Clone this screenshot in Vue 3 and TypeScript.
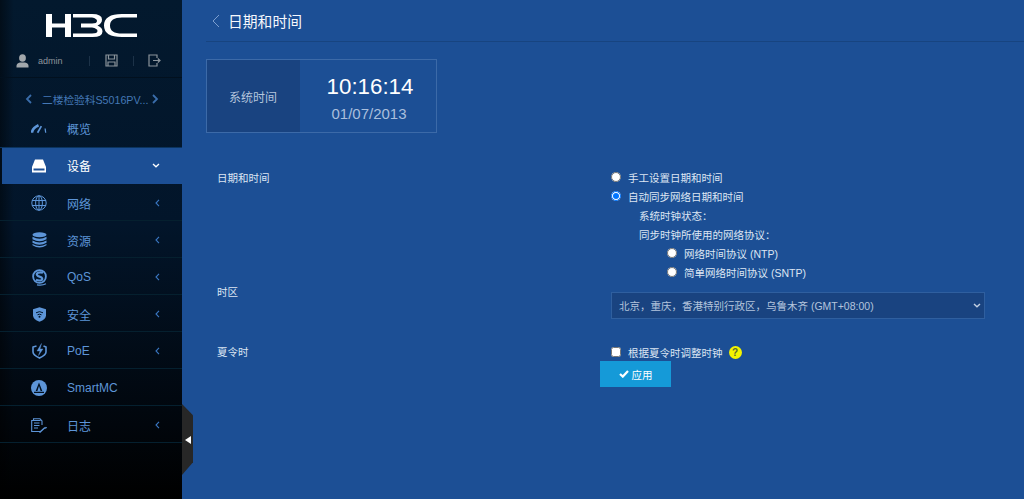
<script setup lang="ts">
// Device web console: date and time page
interface MenuItem {
  label: string
  icon: string
  arrow?: boolean
  active?: boolean
}

const menu: MenuItem[] = [
  { label: '概览', icon: 'gauge' },
  { label: '设备', icon: 'drive', arrow: true, active: true },
  { label: '网络', icon: 'globe', arrow: true },
  { label: '资源', icon: 'db', arrow: true },
  { label: 'QoS', icon: 'qos', arrow: true },
  { label: '安全', icon: 'shield', arrow: true },
  { label: 'PoE', icon: 'poe', arrow: true },
  { label: 'SmartMC', icon: 'smart' },
  { label: '日志', icon: 'log', arrow: true },
]
</script>

<template>
  <div class="page">
    <aside class="sidebar">
      <div class="logo">
        <svg width="92" height="24" viewBox="0 0 92 24" fill="#fff">
          <path d="M0 0h6v23H0zM19 0h6v23h-6zM6 9.500h13v4H6z" />
          <path d="M27 0h19q10 0 10 5.500 0 4-4.500 6 5 2 5 6 0 5.500-10 5.500H27v-3.500h19q5.500 0 5.500-2.500t-5.500-3.500H35v-4h11q5 0 5-2.500T46 3.500H27z" />
          <path d="M91 0H76Q58 0 58 11.500T76 23h15v-3.500H76q-12 0-12-8t12-8h15z" />
        </svg>
      </div>

      <div class="user-bar">
        <svg class="user-icon" width="13" height="14" viewBox="0 0 13 14">
          <ellipse cx="6.500" cy="4" rx="3.400" ry="3.800" fill="#a3a8ac" />
          <path d="M0.500 13.500v-1.800q0-2.200 3.500-3.200h5q3.500 1 3.500 3.200v1.800z" fill="#a3a8ac" />
        </svg>
        <span class="user-name">admin</span>
        <i class="bar-sep first"></i>
        <svg class="save-icon" width="13" height="13" viewBox="0 0 13 13" fill="none" stroke="#8b949b" stroke-width="1.200">
          <path d="M1 1h11v11H1z" />
          <path d="M3.500 1v4h6V1M3 12V8h7v4" />
        </svg>
        <i class="bar-sep second"></i>
        <svg class="exit-icon" width="13" height="13" viewBox="0 0 13 13" fill="none" stroke="#8b949b" stroke-width="1.200">
          <path d="M9 4V1H1v11h8V9" />
          <path d="M5 6.500h7M9.800 4.500l2.200 2-2.200 2" />
        </svg>
      </div>

      <div class="device-name">
        <svg width="7" height="10" viewBox="0 0 7 10" fill="none" stroke="#3a6dab" stroke-width="1.800"><path d="M6 1L2 5l4 4" /></svg>
        <span>二楼检验科S5016PV...</span>
        <svg width="7" height="10" viewBox="0 0 7 10" fill="none" stroke="#3a6dab" stroke-width="1.800"><path d="M1 1l4 4-4 4" /></svg>
      </div>

      <nav class="menu">
        <div
          v-for="item in menu"
          :key="item.label"
          class="menu-item"
          :class="{ active: item.active }"
        >
          <span class="menu-icon">
            <svg v-if="item.icon === 'gauge'" width="17" height="11" viewBox="0 0 17 11" fill="none" stroke="currentColor">
              <path d="M1 10q0.500-5 7-8" stroke-width="2.800" />
              <path d="M7 10l4-7" stroke-width="1.800" />
              <path d="M15 5.500l.6 4.500" stroke-width="1.300" />
            </svg>
            <svg v-else-if="item.icon === 'drive'" width="14" height="14" viewBox="0 0 14 14">
              <path d="M3 0.500h8l3 7.500v5.500H0V8z" fill="currentColor" />
              <path d="M1.500 9.500h11v2h-11z" fill="#1c4f95" />
            </svg>
            <svg v-else-if="item.icon === 'globe'" width="16" height="16" viewBox="0 0 16 16" fill="none" stroke="currentColor">
              <circle cx="8" cy="8" r="7.200" />
              <ellipse cx="8" cy="8" rx="3.400" ry="7.200" />
              <path d="M1 5.500h14M1 10.500h14M8 1v14" />
            </svg>
            <svg v-else-if="item.icon === 'db'" width="15" height="16" viewBox="0 0 15 16" fill="currentColor">
              <ellipse cx="7.500" cy="2.800" rx="7" ry="2.500" />
              <path d="M0.500 4.800q7 4 14 0v2.400q-7 4-14 0zM0.500 8.400q7 4 14 0v2.400q-7 4-14 0zM0.500 12q7 4 14 0v1.200q-7 4.500-14 0z" />
            </svg>
            <svg v-else-if="item.icon === 'qos'" width="15" height="17" viewBox="0 0 15 17">
              <circle cx="7.500" cy="7.500" r="6.400" fill="#02162a" stroke="currentColor" stroke-width="1.800" />
              <path d="M11 3.800Q8.500 2.800 6 3.800 3.500 5.300 6 7l3.500 1.500q1.800 1.800-.5 2.800-2.500.6-5-.5" fill="none" stroke="currentColor" stroke-width="2.200" />
              <path d="M5 15.800q5 1 9-1" fill="none" stroke="currentColor" stroke-width="1.200" />
            </svg>
            <svg v-else-if="item.icon === 'shield'" width="13" height="15" viewBox="0 0 13 15">
              <path d="M6.500 0.300L13 2.200v6q0 4-6.500 6.500Q0 12.200 0 8.200v-6z" fill="currentColor" />
              <path d="M3 5.800q3.500-2.300 7 0M4.500 7.800q2-1.200 4 0" fill="none" stroke="#02162a" stroke-width="1" />
              <circle cx="6.500" cy="9.800" r="1" fill="#02162a" />
            </svg>
            <svg v-else-if="item.icon === 'poe'" width="15" height="16" viewBox="0 0 15 16" fill="none" stroke="currentColor" stroke-width="1.600">
              <path d="M4.500 3L1 4v5q0 3 6.500 6 6.500-3 6.500-6V4l-2.500-1" />
              <path d="M9.500 0.500L5 8h3l-1.500 4.500L11 6H8z" fill="currentColor" stroke-width="0.400" />
            </svg>
            <svg v-else-if="item.icon === 'smart'" width="16" height="16" viewBox="0 0 16 16">
              <circle cx="8" cy="8" r="8" fill="currentColor" />
              <path d="M8 2.500L4.700 11h1.700l1.600-5 1.600 5h1.700zM3 11.800h10v1.200H3z" fill="#02101f" />
            </svg>
            <svg v-else width="16" height="15" viewBox="0 0 16 15" fill="none" stroke="currentColor" stroke-width="1.100">
              <path d="M2.500 2.500V0.800h6.500L11 3v4M9 13.500H0.700V2.500h8.800" />
              <path d="M3 5h5.500M3 7.500h5.500M3 10h4" />
              <path d="M8.500 14.500l5-4.500q1.200.3 2-.8" stroke-width="1.500" />
            </svg>
          </span>
          <span class="menu-label">{{ item.label }}</span>
          <svg v-if="item.active" class="menu-arrow down" width="8" height="5" viewBox="0 0 8 5" fill="none" stroke="currentColor" stroke-width="1.300"><path d="M1 1l3 2.800L7 1" /></svg>
          <svg v-else-if="item.arrow" class="menu-arrow" width="5" height="8" viewBox="0 0 5 8" fill="none" stroke="#3a78c4" stroke-width="1.100"><path d="M4 0.800L1 4l3 3.200" /></svg>
        </div>
      </nav>

      <div class="collapse-handle"><i></i></div>
    </aside>

    <main class="content">
      <header class="title-bar">
        <svg width="9" height="14" viewBox="0 0 9 14" fill="none" stroke="#7d9fcf" stroke-width="1"><path d="M8 1L2 7l6 6" /></svg>
        <h1>日期和时间</h1>
      </header>

      <section class="clock-card">
        <div class="clock-label">系统时间</div>
        <div class="clock-value">
          <div class="clock-time">10:16:14</div>
          <div class="clock-date">01/07/2013</div>
        </div>
      </section>

      <form class="form" @submit.prevent>
        <div class="form-label first-label">日期和时间</div>
        <div class="options">
          <label class="opt"><input type="radio" name="mode" />手工设置日期和时间</label>
          <label class="opt"><input type="radio" name="mode" checked />自动同步网络日期和时间</label>
          <div class="opt sub">系统时钟状态：</div>
          <div class="opt sub">同步时钟所使用的网络协议：</div>
          <label class="opt proto"><input type="radio" name="proto" />网络时间协议 (NTP)</label>
          <label class="opt proto"><input type="radio" name="proto" />简单网络时间协议 (SNTP)</label>
        </div>

        <div class="form-label zone-label">时区</div>
        <div class="zone">
          <select>
            <option>北京，重庆，香港特别行政区，乌鲁木齐 (GMT+08:00)</option>
          </select>
          <svg class="zone-arrow" width="8" height="5" viewBox="0 0 8 5" fill="none" stroke="#c3d0e2" stroke-width="1.400"><path d="M1 1l3 2.800L7 1" /></svg>
        </div>

        <div class="form-label dst-label">夏令时</div>
        <div class="dst">
          <label class="opt"><input type="checkbox" />根据夏令时调整时钟</label>
          <span class="help">?</span>
        </div>

        <div class="actions">
          <button type="submit">
            <svg width="10" height="8" viewBox="0 0 10 8" fill="none" stroke="#fff" stroke-width="2.200"><path d="M1 4l2.800 2.600L9 1" /></svg>
            应用
          </button>
        </div>
      </form>
    </main>
  </div>
</template>

<style>
html,
body {
  margin: 0;
  background: #1c4f95;
}
</style>

<style scoped>
.page {
  display: flex;
  width: 1024px;
  height: 499px;
  overflow: hidden;
  background: #1c4f95;
  color: #dce6f3;
  font-family: "Liberation Sans", "Noto Sans CJK SC", sans-serif;
}

/* sidebar */
.sidebar {
  position: relative;
  flex: 0 0 182px;
  background:
    linear-gradient(90deg, rgba(0, 0, 0, 0.45) 0, rgba(0, 0, 0, 0) 14px),
    linear-gradient(180deg, #03192e 0%, #02152a 45%, #01060c 85%, #000 100%);
}

.logo {
  height: 49px;
  padding: 14px 0 0 46px;
  box-sizing: border-box;
}

.user-bar {
  position: relative;
  display: flex;
  align-items: center;
  height: 29px;
  padding: 0 0 5px 16px;
  box-sizing: border-box;
  border-bottom: 1px solid #02101e;
}

.user-name {
  margin-left: 9px;
  font-size: 9px;
  color: #8d959c;
}

.bar-sep {
  width: 1px;
  height: 10px;
  background: #1c3248;
}

.bar-sep.first {
  margin-left: 26px;
}

.save-icon {
  margin-left: 15px;
}

.bar-sep.second {
  margin-left: 15px;
}

.exit-icon {
  margin-left: 14px;
}

.device-name {
  display: flex;
  align-items: center;
  height: 42px;
  padding: 0 0 0 25px;
  box-sizing: border-box;
  font-size: 10.700px;
  color: #4478b6;
}

.device-name span {
  margin: 0 3px 0 10px;
}

.menu {
  margin-top: -2px;
}

.menu-item {
  display: flex;
  align-items: center;
  height: 37px;
  padding-top: 2px;
  box-sizing: border-box;
  border-bottom: 1px solid #05202f;
  color: #5d95d8;
  font-size: 12px;
}

.menu-item:first-child {
  height: 30px;
  padding-top: 0;
  padding-bottom: 8px;
  border-bottom: 1px solid #0b345f;
}

.menu-item.active {
  height: 36px;
  margin-left: 2px;
  padding-top: 0;
  padding-bottom: 1px;
  background: #1c4f95;
  color: #fff;
  border-bottom: 0;
}

.menu-icon {
  display: flex;
  align-items: center;
  justify-content: center;
  width: 16px;
  margin-left: 31px;
}

.menu-item.active .menu-icon {
  margin-left: 29px;
}

.menu-label {
  flex: 1;
  margin-left: 20px;
}

.menu-arrow {
  margin-right: 22px;
}

.collapse-handle {
  position: absolute;
  top: 404px;
  left: 182px;
  display: flex;
  align-items: center;
  justify-content: center;
  width: 11px;
  height: 71px;
  background: #272727;
  clip-path: polygon(0 0, 100% 16%, 100% 82%, 0 100%);
}

.collapse-handle i {
  width: 0;
  height: 0;
  border-top: 4.500px solid transparent;
  border-bottom: 4.500px solid transparent;
  border-right: 6px solid #fff;
}

/* content */
.content {
  flex: 1;
  min-width: 0;
  padding: 0 0 0 24px;
}

.title-bar {
  display: flex;
  align-items: center;
  gap: 8px;
  height: 41px;
  padding-left: 5px;
  border-bottom: 1px solid #174480;
}

.title-bar h1 {
  margin: 0;
  font-size: 14.800px;
  font-weight: 400;
  color: #f6f8fc;
}

.clock-card {
  display: flex;
  width: 231px;
  height: 74px;
  margin-top: 17px;
  box-sizing: border-box;
  border: 1px solid #3c6aa8;
}

.clock-label {
  display: flex;
  align-items: center;
  justify-content: center;
  width: 93px;
  padding-right: 1px;
  box-sizing: border-box;
  background: #194380;
  font-size: 12px;
  color: #b4c5dd;
}

.clock-value {
  flex: 1;
  text-align: center;
}

.clock-time {
  margin-top: 13px;
  padding-left: 4px;
  font-size: 22.300px;
  line-height: 28px;
  color: #fff;
}

.clock-date {
  margin-top: 4px;
  padding-left: 2px;
  font-size: 15px;
  line-height: 18px;
  color: #a9bfdd;
}

.form {
  display: grid;
  grid-template-columns: 394px 374px;
  margin-top: 35px;
  padding-left: 11px;
  font-size: 10.500px;
  color: #dce6f3;
}

.form-label {
  font-size: 10.500px;
}

.first-label {
  line-height: 20px;
}

.options {
  display: flex;
  flex-direction: column;
  margin-top: -0.500px;
  padding-bottom: 0.500px;
}

.opt {
  display: flex;
  align-items: center;
  height: 19px;
}

.opt input {
  width: 10px;
  height: 10px;
  margin: 0 7px 0 0;
}

.sub {
  padding-left: 28px;
}

.proto {
  padding-left: 56px;
}

.zone-label {
  margin-top: 3px;
  line-height: 14px;
}

.zone {
  position: relative;
  margin-top: 10px;
}

.zone select {
  display: block;
  width: 374px;
  height: 27px;
  padding-left: 7px;
  border: 1px solid #2f5f9f;
  border-radius: 0;
  background-color: #194380;
  color: #b4c5dd;
  font: inherit;
  font-size: 10.500px;
  outline: none;
  appearance: none;
}

.zone-arrow {
  position: absolute;
  top: 11px;
  right: 4px;
}

.dst-label {
  margin-top: 26px;
  line-height: 14px;
}

.dst {
  display: flex;
  align-items: center;
  gap: 6px;
  margin-top: 23px;
  height: 20px;
}

.help {
  display: flex;
  align-items: center;
  justify-content: center;
  width: 13px;
  height: 13px;
  border-radius: 50%;
  background: #f4f400;
  color: #5a6a30;
  font-size: 10px;
  font-weight: 700;
}

.actions {
  grid-column: 2;
  margin: -1px 0 0 -11px;
}

.actions button {
  display: flex;
  align-items: center;
  justify-content: center;
  gap: 3px;
  width: 71px;
  height: 26px;
  padding: 0;
  border: 0;
  background: #159ad8;
  color: #fff;
  font: inherit;
  font-size: 10.500px;
}
</style>
